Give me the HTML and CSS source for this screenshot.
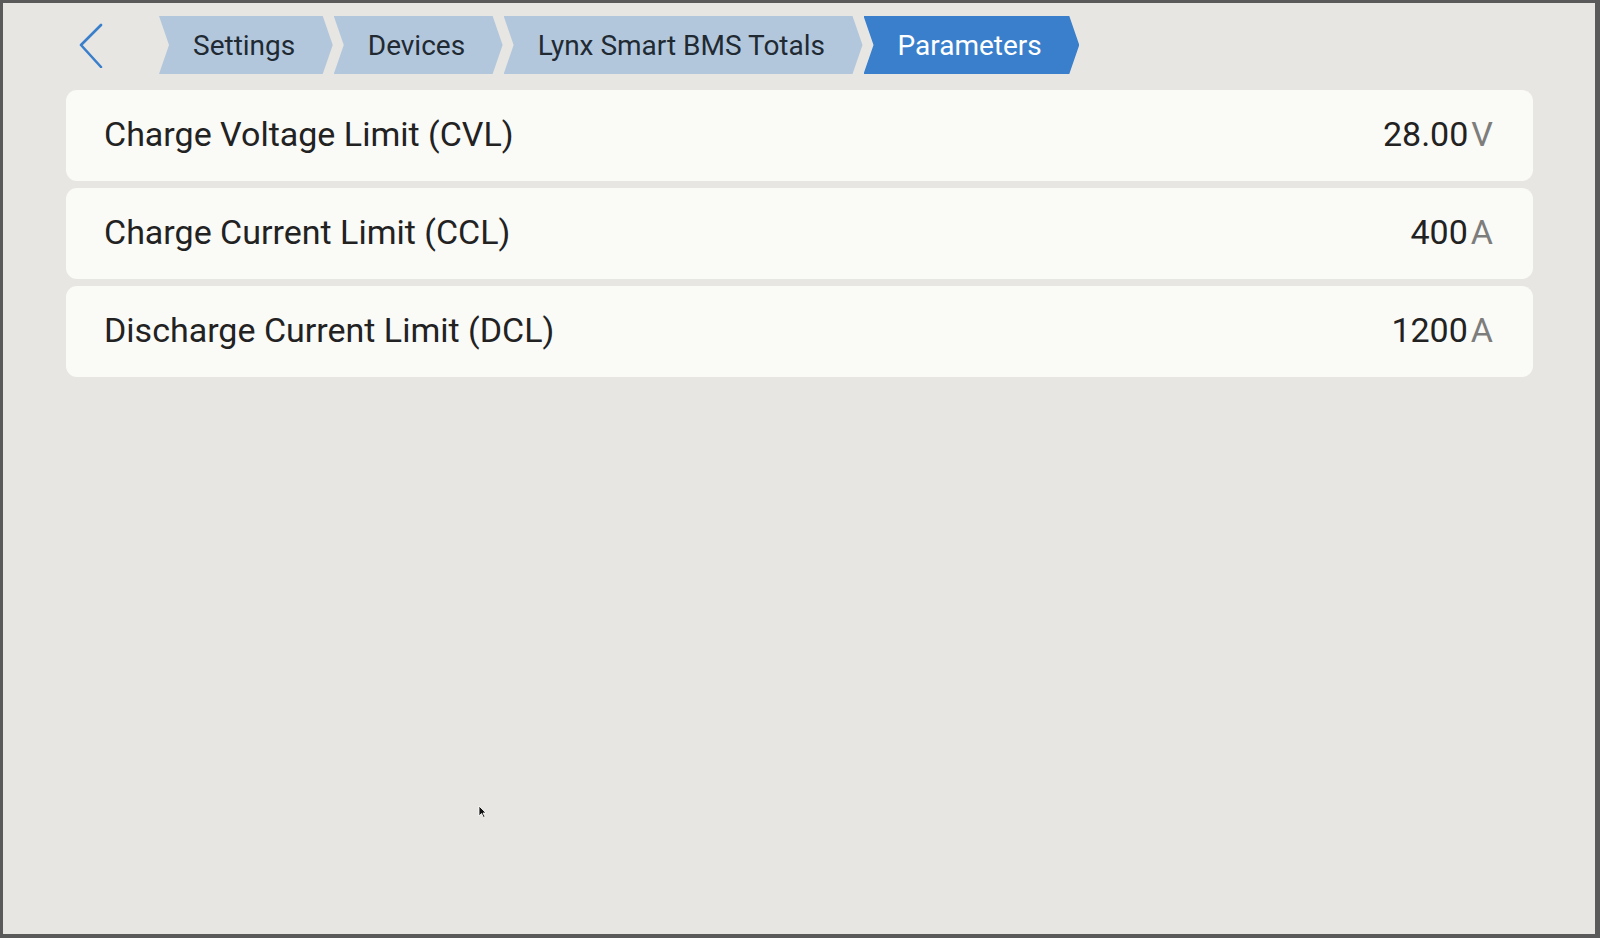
FILE: index.html
```html
<!DOCTYPE html>
<html lang="en">
<head>
    <meta charset="UTF-8">
    <meta name="viewport" content="width=device-width, initial-scale=1.0">
    <title>Parameters</title>
    <link rel="stylesheet" href="styles.css">
</head>
<body>
    <div class="frame">
        <div class="header">
            <button class="back-btn" aria-label="Back">
                <svg width="30" height="46" viewBox="0 0 30 46">
                    <polyline points="26,3 6,23 26,45" fill="none" stroke="#3a7fcc" stroke-width="2.6" stroke-linecap="round" stroke-linejoin="round"/>
                </svg>
            </button>
            <nav class="breadcrumbs">
                <span class="crumb">Settings</span>
                <span class="crumb">Devices</span>
                <span class="crumb">Lynx Smart BMS Totals</span>
                <span class="crumb active">Parameters</span>
            </nav>
        </div>

        <div class="list">
            <div class="row">
                <span class="label">Charge Voltage Limit (CVL)</span>
                <span class="value">28.00<span class="unit">V</span></span>
            </div>
            <div class="row">
                <span class="label">Charge Current Limit (CCL)</span>
                <span class="value">400<span class="unit">A</span></span>
            </div>
            <div class="row">
                <span class="label">Discharge Current Limit (DCL)</span>
                <span class="value">1200<span class="unit">A</span></span>
            </div>
        </div>

        <!-- mouse pointer left on the screen -->
        <svg class="cursor" width="9" height="13" viewBox="0 0 9 13">
            <path d="M1 1 L1 11 L3.5 8.5 L5.5 12.5 L7 11.8 L5 8 L8 8 Z" fill="#111" stroke="#fff" stroke-width="0.8"/>
        </svg>
    </div>
</body>
</html>
```

FILE: styles.css
```css
html, body {
    margin: 0;
    padding: 0;
}
body {
    font-family: Roboto, "Noto Sans", Arial, sans-serif;
    color: #222;
    background-color: #5a5a5a;
}
.frame {
    position: relative;
    box-sizing: border-box;
    width: 1600px;
    height: 938px;
    border-style: solid;
    border-color: #5a5a5a;
    border-width: 3px 5px 4px 3px;
    background-color: #e7e6e2;
}
.header {
    display: flex;
    align-items: center;
    height: 58px;
    margin-top: 13px;
    padding-left: 72px;
}
.back-btn {
    display: flex;
    align-items: center;
    background: none;
    border: none;
    padding: 0;
    width: 84px;
    height: 58px;
    cursor: pointer;
}
.breadcrumbs {
    display: flex;
    height: 58px;
}
.crumb {
    display: flex;
    align-items: center;
    height: 58px;
    padding: 0 37.5px 0 34px;
    margin-right: 1px;
    font-size: 28px;
    color: #1f2a33;
    background-color: #b3c7dc;
    clip-path: polygon(0 0, calc(100% - 10px) 0, 100% 50%, calc(100% - 10px) 100%, 0 100%, 10px 50%);
}
.crumb.active {
    background-color: #3a7fcc;
    color: #fff;
}
.list {
    display: flex;
    flex-direction: column;
    gap: 7px;
    margin: 16px 62px 0 63px;
}
.row {
    display: flex;
    align-items: center;
    justify-content: space-between;
    box-sizing: border-box;
    height: 91px;
    padding: 0 40px 3px 38px;
    background-color: #fafaf7;
    border-radius: 11px;
    font-size: 34px;
}
.value {
    color: #222;
}
.unit {
    margin-left: 3px;
    color: #7d7d7b;
}
.cursor {
    position: absolute;
    left: 475px;
    top: 802px;
}
```
